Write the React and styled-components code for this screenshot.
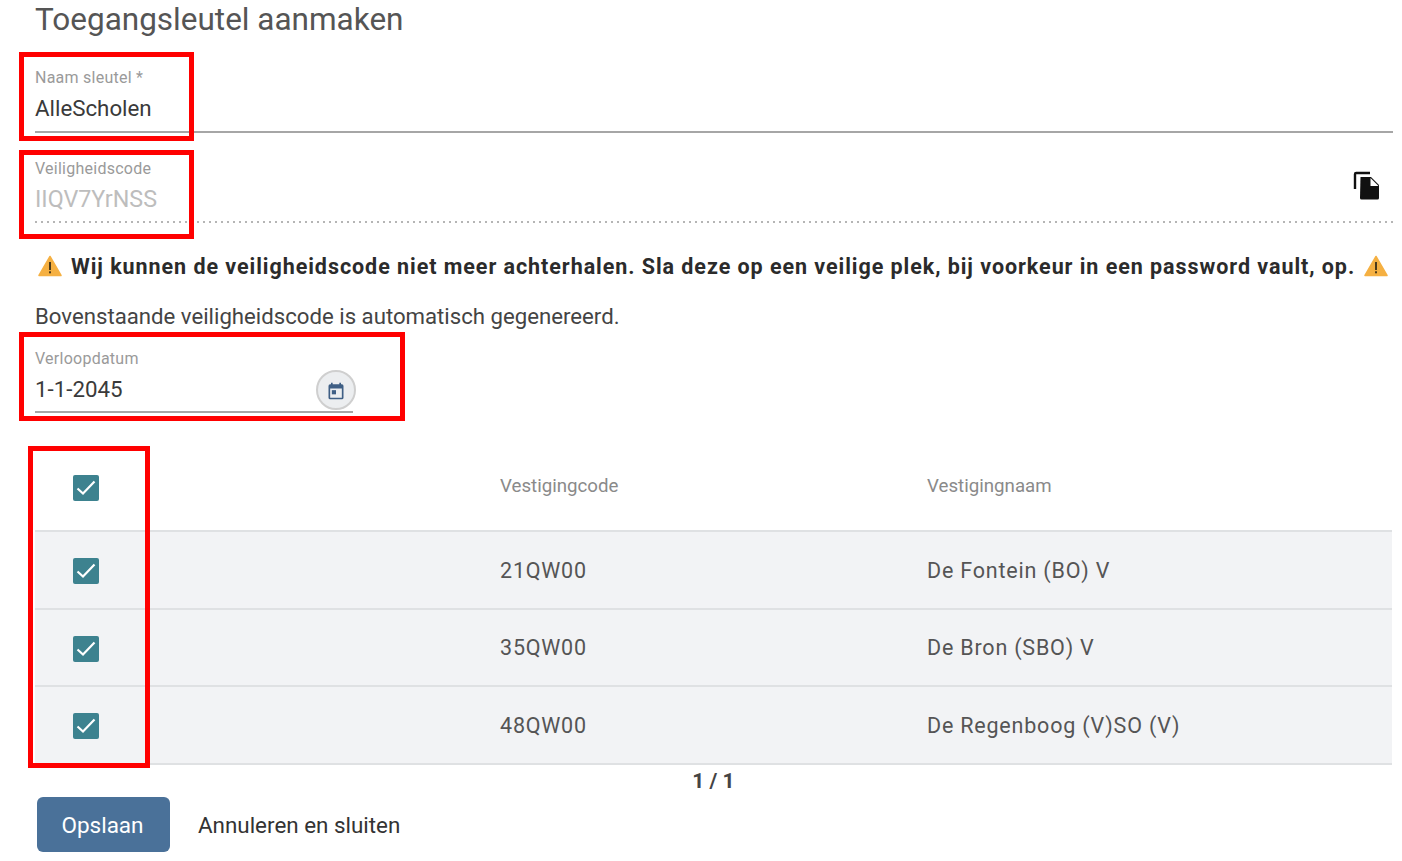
import React from "react";
import styled, { createGlobalStyle } from "styled-components";

const Global = createGlobalStyle`
  html, body { margin: 0; padding: 0; background: #fff; }
  body { font-family: Roboto, "Liberation Sans", sans-serif; color: #333; }
`;
const Page = styled.div`
  position: relative;
  width: 1402px;
  height: 861px;
  overflow: hidden;
  box-sizing: border-box;
  padding-left: 35px;
  padding-right: 9px;
`;
const Title = styled.h1`
  margin: 0;
  height: 52px;
  padding-top: 1px;
  box-sizing: border-box;
  font-size: 31.5px;
  line-height: 38px;
  font-weight: 400;
  color: #555;
`;
const Field = styled.div`
  position: relative;
  box-sizing: border-box;
  height: ${(p) => p.$h}px;
  width: ${(p) => (p.$w ? `${p.$w}px` : "100%")};
  padding-top: ${(p) => p.$pt}px;
  border-bottom: ${(p) => (p.$dotted ? "0" : "2px solid #a6a6a6")};
  ${(p) =>
    p.$dotted &&
    `background: repeating-linear-gradient(90deg, #b5b5b5 0 2px, transparent 2px 6px) left bottom / 100% 2px no-repeat;`}
`;
const Label = styled.div`
  font-size: 16px;
  line-height: 20px;
  letter-spacing: 0.25px;
  color: #9a9a9a;
`;
const Value = styled.div`
  margin-top: ${(p) => p.$mt}px;
  font-size: ${(p) => (p.$muted ? "23.3px" : "22.3px")};
  line-height: 24px;
  color: ${(p) => (p.$muted ? "#bdbdbd" : "#3a3a3a")};
`;
const CopyBtn = styled.div`
  position: absolute;
  right: 11px;
  top: 37px;
  width: 30px;
  height: 30px;
`;
const CalBtn = styled.div`
  position: absolute;
  right: -3px;
  top: 40px;
  width: 40px;
  height: 40px;
  box-sizing: border-box;
  border-radius: 50%;
  background: #eceef0;
  border: 2px solid #cfcfcf;
  display: flex;
  align-items: center;
  justify-content: center;
  padding-top: 2px;
`;
const WarningRow = styled.div`
  display: flex;
  align-items: center;
  justify-content: space-between;
  height: 32px;
  margin-top: 27px;
  padding: 0 5px 0 3px;
  font-size: 21.5px;
  font-weight: 700;
  letter-spacing: 0.945px;
  color: #2b2b2b;
  white-space: nowrap;
`;
const Note = styled.div`
  margin-top: 20px;
  font-size: 22.2px;
  line-height: 28px;
  color: #444;
`;
const Table = styled.div`
  margin-top: 33px;
  margin-right: 1px;
`;
const Row = styled.div`
  display: grid;
  grid-template-columns: 465px 427px 1fr;
  align-items: center;
  box-sizing: border-box;
  height: ${(p) => p.$h}px;
  background: ${(p) => (p.$head ? "#fff" : "#f2f3f5")};
  border-bottom: 2px solid #dfe1e3;
  font-size: 21.5px;
  letter-spacing: 0.8px;
  color: #555;
`;
const HeadCell = styled.div`
  font-size: 18.7px;
  letter-spacing: 0;
  color: #8a8a8a;
  padding-bottom: 5px;
`;
const CheckCell = styled.div`
  padding-left: 38px;
  padding-top: ${(p) => (p.$head ? 0 : 2)}px;
  display: flex;
`;
const Check = styled.div`
  width: 26px;
  height: 26px;
  border-radius: 2px;
  background: #3d828f;
  display: flex;
  align-items: center;
  justify-content: center;
`;
const Pager = styled.div`
  text-align: center;
  font-size: 21px;
  font-weight: 700;
  line-height: 30px;
  color: #444;
  padding-right: 1px;
  margin-top: 1px;
`;
const Actions = styled.div`
  display: flex;
  align-items: center;
  gap: 28px;
  margin-top: 1px;
  padding-left: 2px;
`;
const Save = styled.div`
  width: 133px;
  height: 55px;
  box-sizing: border-box;
  padding-right: 2px;
  border-radius: 6px;
  background: #4a7199;
  color: #fff;
  font-size: 22.5px;
  display: flex;
  align-items: center;
  justify-content: center;
`;
const Cancel = styled.div`
  font-size: 22.4px;
  color: #333;
`;
const Marker = styled.div`
  position: absolute;
  box-sizing: border-box;
  border: 5px solid #ff0000;
  left: ${(p) => p.$x}px;
  top: ${(p) => p.$y}px;
  width: ${(p) => p.$w}px;
  height: ${(p) => p.$h}px;
`;

const Warn = () => (
  <svg width="24" height="22" viewBox="0 0 24 22">
    <path d="M12 1.500 23 20.500H1Z" fill="#f5b042" stroke="#f5b042" strokeWidth="1.500" strokeLinejoin="round" />
    <rect x="11" y="7" width="2" height="8" fill="#4a3a1a" />
    <rect x="11" y="16.300" width="2" height="2" fill="#4a3a1a" />
  </svg>
);
const Tick = () => (
  <svg width="22" height="18" viewBox="0 0 22 18">
    <path d="M2.500 9.500 8 14.500 19.500 2.500" fill="none" stroke="#fff" strokeWidth="2.200" />
  </svg>
);
const rows = [
  ["21QW00", "De Fontein (BO) V", 78],
  ["35QW00", "De Bron (SBO) V", 77],
  ["48QW00", "De Regenboog (V)SO (V)", 78],
];

export default function App() {
  return (
    <Page>
      <Global />
      <Title>Toegangsleutel aanmaken</Title>
      <Field $h={81} $pt={16}>
        <Label>Naam sleutel *</Label>
        <Value $mt={8}>AlleScholen</Value>
      </Field>
      <Field $h={90} $pt={26} $dotted>
        <Label>Veiligheidscode</Label>
        <Value $muted $mt={8}>IIQV7YrNSS</Value>
        <CopyBtn>
          <svg width="30" height="30" viewBox="0 0 30 30">
            <path d="M3 19V4.200Q3 3 4.200 3H18" fill="none" stroke="#111" strokeWidth="2.400" />
            <path d="M8.500 7H19l8 8v13q0 1.500-1.500 1.500h-16Q8 29.500 8 28Z" fill="#111" />
            <path d="M18.500 8v8h8Z" fill="#fff" />
          </svg>
        </CopyBtn>
      </Field>
      <WarningRow>
        <Warn />
        <span>Wij kunnen de veiligheidscode niet meer achterhalen. Sla deze op een veilige plek, bij voorkeur in een password vault, op.</span>
        <Warn />
      </WarningRow>
      <Note>Bovenstaande veiligheidscode is automatisch gegenereerd.</Note>
      <Field $h={83} $pt={19} $w={318}>
        <Label>Verloopdatum</Label>
        <Value $mt={8}>1-1-2045</Value>
        <CalBtn>
          <svg width="20" height="20" viewBox="0 0 24 24" fill="#3f5f85">
            <path d="M19 4h-1V2h-2v2H8V2H6v2H5a2 2 0 0 0-2 2v14a2 2 0 0 0 2 2h14a2 2 0 0 0 2-2V6a2 2 0 0 0-2-2Zm0 16H5V9h14Z" />
            <rect x="7" y="11" width="5" height="5" />
          </svg>
        </CalBtn>
      </Field>
      <Table>
        <Row $head $h={86}>
          <CheckCell $head><Check><Tick /></Check></CheckCell>
          <HeadCell>Vestigingcode</HeadCell>
          <HeadCell>Vestigingnaam</HeadCell>
        </Row>
        {rows.map(([code, name, h]) => (
          <Row key={code} $h={h}>
            <CheckCell><Check><Tick /></Check></CheckCell>
            <div>{code}</div>
            <div>{name}</div>
          </Row>
        ))}
      </Table>
      <Pager>1 / 1</Pager>
      <Actions>
        <Save>Opslaan</Save>
        <Cancel>Annuleren en sluiten</Cancel>
      </Actions>
      <Marker $x={19} $y={52} $w={175} $h={89} />
      <Marker $x={19} $y={150} $w={175} $h={89} />
      <Marker $x={19} $y={332} $w={386} $h={89} />
      <Marker $x={28} $y={446} $w={122} $h={322} />
    </Page>
  );
}
